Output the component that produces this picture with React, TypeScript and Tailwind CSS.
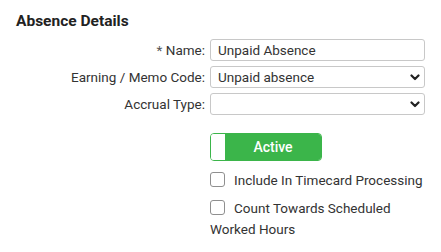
import React from "react";

function Chevron() {
  return (
    <svg width="10" height="7" viewBox="0 0 10 7" className="shrink-0">
      <polyline points="1.5,1.5 5,5 8.5,1.5" fill="none" stroke="#222" strokeWidth="2.2" strokeLinecap="round" strokeLinejoin="round" />
    </svg>
  );
}

function Box() {
  return (
    <span className="inline-block w-[15px] h-[15px] border border-[#8f8f8f] rounded-[3px] bg-white align-[-2px] mr-[9px]" />
  );
}

export default function App() {
  return (
    <div className="w-[441px] h-[252px] bg-white text-[#333] font-['Roboto',sans-serif] text-[13.5px] overflow-hidden">
      <div className="pl-[16px] pt-[9px] text-[15.5px] leading-6 font-bold text-[#222]">Absence Details</div>
      <div className="grid grid-cols-[189px_215px] gap-x-[5px] gap-y-[5px] pl-[16px] mt-[6px] items-center">
        <div className="text-right leading-[22px]">
          <span className="text-[#555]">*</span> Name:
        </div>
        <div className="h-[22px] border border-[#c8c8c8] rounded-[3px] flex items-center px-[7px]">Unpaid Absence</div>
        <div className="text-right leading-[22px]">Earning / Memo Code:</div>
        <div className="h-[22px] border border-[#c8c8c8] rounded-[3px] flex items-center justify-between pl-[7px] pr-[4px]">
          <span>Unpaid absence</span>
          <Chevron />
        </div>
        <div className="text-right leading-[22px]">Accrual Type:</div>
        <div className="h-[22px] border border-[#c8c8c8] rounded-[3px] flex items-center justify-end pl-[7px] pr-[4px]">
          <Chevron />
        </div>
        <div />
        <div className="pt-[13px]">
          <div className="flex w-[112px] h-[28px] rounded-[4px] border border-[#3bb54a] overflow-hidden">
            <div className="w-[14px] bg-white" />
            <div className="flex-1 bg-[#3bb54a] text-white font-medium text-[14px] flex items-center justify-center">Active</div>
          </div>
          <div className="mt-[9px] leading-[21px] whitespace-nowrap">
            <Box />Include In Timecard Processing
          </div>
          <div className="mt-[7px] leading-[21px] w-[215px]">
            <Box />Count Towards Scheduled Worked Hours
          </div>
        </div>
      </div>
    </div>
  );
}
